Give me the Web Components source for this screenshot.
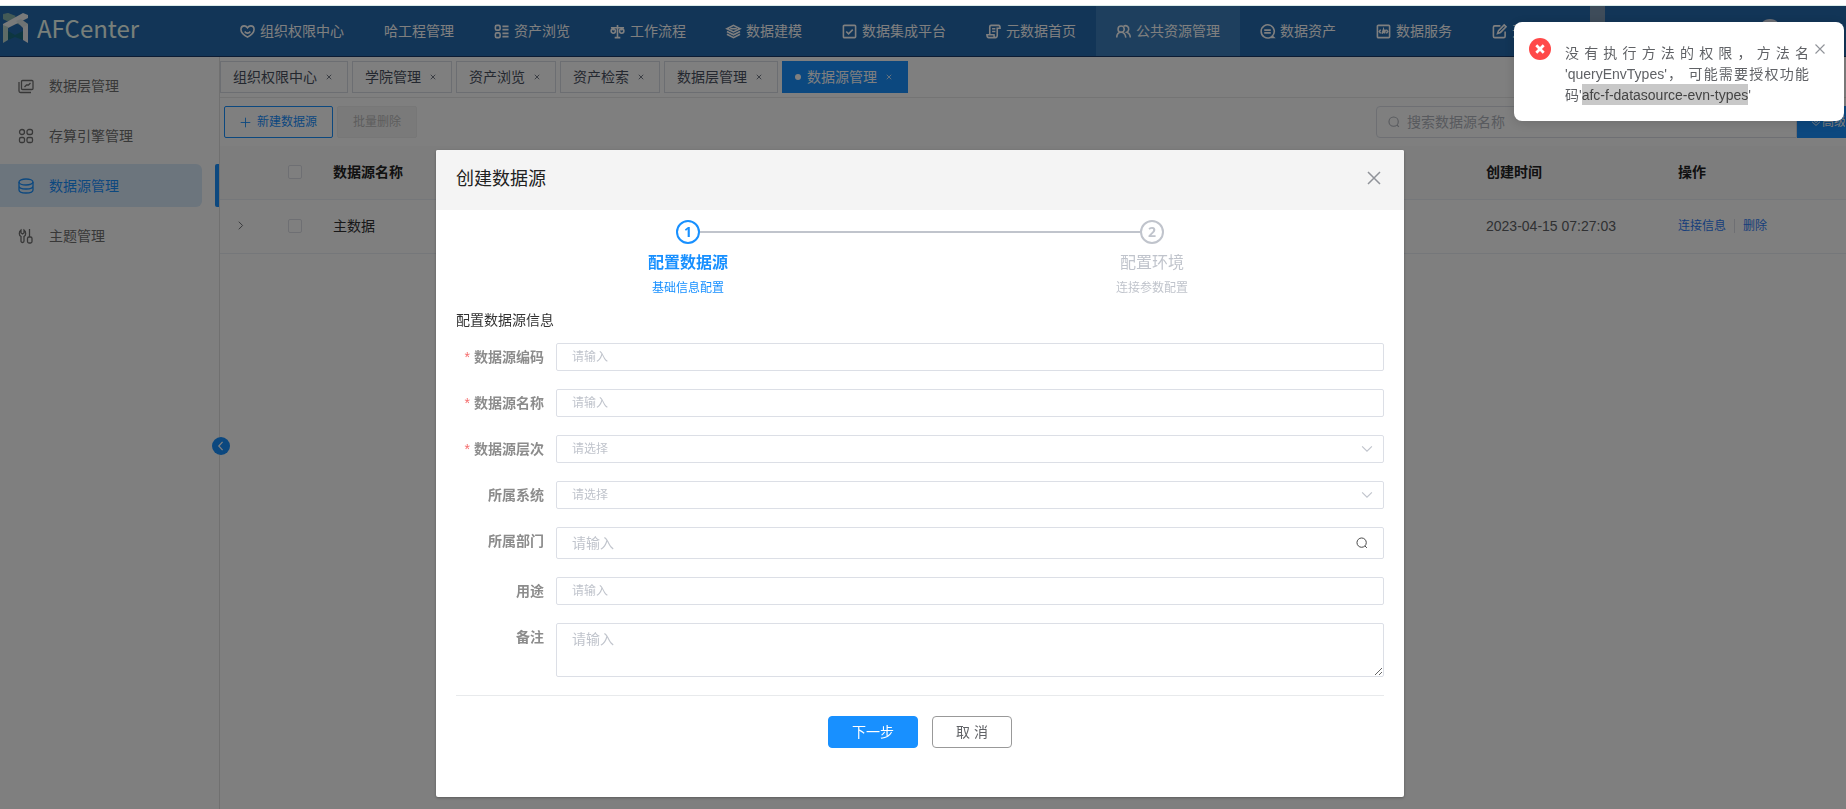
<!DOCTYPE html>
<html lang="zh-CN">
<head>
<meta charset="utf-8">
<title>AFCenter</title>
<style>
  html, body {
    margin: 0;
    height: 100%;
  }
  body {
    --primary: #1890ff;
    --line: #dcdfe6;
    background: #fff;
    color: #333;
    font: 14px/20px "Liberation Sans", "Noto Sans CJK SC", sans-serif;
    overflow: hidden;
  }
</style>
</head>
<body>
<afc-app></afc-app>

<script>
const ICONS = {
  heart: '<path d="M8 14C3.500 11.500 1 9 1 5.800 1 3.500 2.600 2 4.600 2 6.200 2 7.300 3 8 4c.7-1 1.800-2 3.400-2C13.400 2 15 3.500 15 5.800 15 9 12.500 11.500 8 14z"/><path d="M5 8c1.500 2.300 4.500 2.300 6 0"/>',
  list: '<rect x="1.500" y="1.500" width="5" height="5" rx="1.500"/><rect x="1.500" y="9.500" width="5" height="5" rx="1.500"/><path d="M9 2.500h6.500M9 6h6.500M9 10h6.500M9 13.500h6.500"/>',
  scale: '<path d="M8 1v14M5 14.500h6M1 4h14M3.500 4v3M12.500 4v3"/><circle cx="3.500" cy="7.500" r="2.300"/><circle cx="12.500" cy="7.500" r="2.300"/>',
  layers: '<path d="M8 1.500L15 5 8 8.500 1 5z"/><path d="M4.500 5h7"/><path d="M1 8l7 3.500L15 8M1 11l7 3.500 7-3.500"/>',
  check: '<rect x="1.500" y="1.500" width="13" height="13" rx="1"/><path d="M4.500 8l2.500 2.500L11.500 6"/>',
  scroll: '<path d="M4 11V3c0-1 .5-1.500 1.500-1.500h8c1 0 1.500 1 1.500 3h-3V12c0 2-1 2.500-2 2.500H3c-1.500 0-2-1-2-3h7.500c0 2 .5 3 1.500 3"/><path d="M6.500 5h3.500M6.500 8h3.500"/>',
  users: '<circle cx="5.500" cy="5.500" r="3.300"/><path d="M.8 14.500c0-3.500 2-5.700 4.700-5.700s4.500 2.200 5 5.700M8 2.500C11 .5 14 3 13.500 6c-.2 1.300-1 2.300-2 2.800 2.300.8 3.700 3 3.700 5.700"/>',
  chat: '<path d="M13 13a7 7 0 1 0-2 1.300h3.500z"/><path d="M4.500 6.500h7M4.500 9.500h7"/>',
  code: '<rect x="1.500" y="1.500" width="13" height="13" rx="1"/><path d="M5 6L3.500 8 5 10M11 6l1.500 2L11 10M6.500 10.500L8 6l1 4 1-4"/>',
  edit: '<path d="M9 2H3c-1 0-1.500.5-1.500 1.500V13c0 1 .5 1.500 1.500 1.500h9.500c1 0 1.500-.5 1.500-1.500V8"/><path d="M6 10l1-3 6-6 2 2-6 6z"/>',
  frame: '<rect x="3.500" y="2.500" width="11.500" height="9" rx="1"/><path d="M1 4v9c0 1 .5 1.500 1.500 1.500H13M6.500 9l2-2h2l2-2"/>',
  grid: '<circle cx="4" cy="4" r="2.500"/><rect x="9" y="1.500" width="5.500" height="5" rx="2"/><rect x="1.500" y="9.500" width="5" height="5" rx="1.500"/><rect x="9" y="9.500" width="5.500" height="5" rx="1.500"/>',
  database: '<ellipse cx="8" cy="4" rx="7" ry="3"/><path d="M1 4v8c0 4 14 4 14 0V4M1 8c0 4 14 4 14 0"/>',
  tools: '<path d="M3 8.500C1 7.500.5 4 3 2v3l1.500 1L6 5V2c2.500 2 2 5.500 0 6.500V13c0 2-3 2-3 0zM11.500 1v8"/><rect x="9.500" y="9" width="4.500" height="6" rx="1.500"/>',
  plus: '<path d="M8 1v14M1 8h14"/>',
  close: '<path d="M2 2l12 12M14 2L2 14"/>',
  search: '<circle cx="7.500" cy="7.500" r="6.200"/><path d="M12 12l2.500 2.500"/>',
  left: '<path d="M10.500 1.500L4.500 8l6 6.500"/>',
  right: '<path d="M5.500 2.500L11 8l-5.500 5.500"/>',
  down: '<path d="M1.500 4.500L8 11l6.500-6.500"/>',
  more: '<path d="M1.500 3L8 9l6.500-6M1.500 7.500l6.500 6 6.500-6"/>',
  error: '<circle cx="8" cy="8" r="8" fill="currentColor" stroke="none"/><path d="M5.300 5.300l5.400 5.400M10.700 5.300l-5.400 5.400" stroke="#fff" stroke-width="2"/>'
};

// Base class: puts the class's markup in an open shadow root
class AfcElement extends HTMLElement {
  connectedCallback() {
    if (this.shadowRoot) return;
    this.attachShadow({ mode: 'open' });
    this.shadowRoot.innerHTML = this.render();
  }
  attr(name) {
    return this.getAttribute(name) || '';
  }
}

class AfcIcon extends AfcElement {
  render() {
    return `
      <style>
        :host { display: inline-flex; flex: none; width: 15px; height: 15px; }
        svg { width: 100%; height: 100%; overflow: visible; }
      </style>
      <svg viewBox="0 0 16 16" fill="none" stroke="currentColor" stroke-width="${this.attr('stroke') || 1.5}" aria-hidden="true">${ICONS[this.attr('name')]}</svg>
    `;
  }
}

class AfcNavItem extends AfcElement {
  render() {
    const icon = this.attr('icon');
    return `
      <style>
        :host { display: flex; flex: none; }
        a {
          display: flex;
          align-items: center;
          gap: 5px;
          padding: 0 20px;
          color: #fff;
          text-decoration: none;
          white-space: nowrap;
        }
        :host([active]) a { background: #3c7ebc; }
      </style>
      <a href="#">${icon ? `<afc-icon name="${icon}" stroke="1.700"></afc-icon>` : ''}<slot></slot></a>
    `;
  }
}

class AfcHeader extends AfcElement {
  render() {
    return `
      <style>
        :host {
          display: flex;
          height: 50px;
          background: #246aae;
          border-bottom: 1px solid #183868;
          overflow: hidden;
        }
        .logo {
          display: flex;
          align-items: center;
          gap: 8px;
          flex: none;
          box-sizing: border-box;
          width: 220px;
          padding: 0 0 6px 2px;
          color: #f0fff4;
          font: 24px/40px "Noto Sans CJK SC", sans-serif;
        }
        .logo svg { width: 27px; height: 32px; }
        nav { display: flex; flex: none; }
        .block { width: 15px; height: 16px; margin-left: 44px; background: #7c98b4; }
        .avatar { width: 22px; height: 22px; margin: 13px 0 0 154px; border-radius: 50%; background: #d8dce8; }
      </style>
      <div class="logo">
        <svg viewBox="0 0 27 32" aria-hidden="true">
          <path d="M1 2l5-1 20 11v3l-5-1L1 7z" fill="#7fa9ac"/>
          <path d="M6 1L1 3v4l4 2 5-2 4-3z" fill="#86b4ac"/>
          <path d="M21 1l5 2v3L6 16l-5 1v-5z" fill="#f2f4f4"/>
          <path d="M14 9l5-2 7 5v5l-5-1z" fill="#dfe6e8"/>
          <path d="M21 15l5-2v18l-5-3z" fill="#eef0f2"/>
          <path d="M1 13l5 2v13l-5 3z" fill="#bcd6cc"/>
          <path d="M6 19l7 4 8-4v9l-8-3-7 3z" fill="#1a6c80"/>
        </svg>
        <span>AFCenter</span>
      </div>
      <nav>
        <afc-nav-item icon="heart">组织权限中心</afc-nav-item>
        <afc-nav-item>哈工程管理</afc-nav-item>
        <afc-nav-item icon="list">资产浏览</afc-nav-item>
        <afc-nav-item icon="scale">工作流程</afc-nav-item>
        <afc-nav-item icon="layers">数据建模</afc-nav-item>
        <afc-nav-item icon="check">数据集成平台</afc-nav-item>
        <afc-nav-item icon="scroll">元数据首页</afc-nav-item>
        <afc-nav-item icon="users" active>公共资源管理</afc-nav-item>
        <afc-nav-item icon="chat">数据资产</afc-nav-item>
        <afc-nav-item icon="code">数据服务</afc-nav-item>
        <afc-nav-item icon="edit">开</afc-nav-item>
      </nav>
      <div class="block"></div>
      <div class="avatar"></div>
    `;
  }
}

class AfcSideItem extends AfcElement {
  render() {
    return `
      <style>
        :host { display: flex; justify-content: space-between; height: 43px; color: #707070; }
        a {
          display: flex;
          flex: 1;
          align-items: center;
          gap: 15px;
          padding-left: 18px;
          margin-right: 17px;
          border-radius: 0 6px 6px 0;
          color: inherit;
          text-decoration: none;
        }
        afc-icon { width: 16px; height: 16px; }
        :host([active]) { color: var(--primary); }
        :host([active]) a { background: #d8eafa; margin-right: 13px; }
        :host([active])::after {
          content: "";
          width: 4px;
          border-radius: 2px 0 0 2px;
          background: var(--primary);
        }
      </style>
      <a href="#"><afc-icon name="${this.attr('icon')}" stroke="1.300"></afc-icon><slot></slot></a>
    `;
  }
}

class AfcSidebar extends AfcElement {
  render() {
    return `
      <style>
        :host {
          display: block;
          position: relative;
          flex: none;
          width: 219px;
          border-right: 1px solid #e0e0e0;
        }
        nav { display: flex; flex-direction: column; gap: 7px; padding-top: 7px; }
        /* round handle that sits on the border */
        button {
          position: absolute;
          top: 380px;
          right: -11px;
          display: flex;
          align-items: center;
          justify-content: center;
          width: 18px;
          height: 18px;
          padding: 0;
          border: 0;
          border-radius: 50%;
          background: var(--primary);
          color: #fff;
        }
        button afc-icon { width: 10px; height: 10px; }
      </style>
      <nav>
        <afc-side-item icon="frame">数据层管理</afc-side-item>
        <afc-side-item icon="grid">存算引擎管理</afc-side-item>
        <afc-side-item icon="database" active>数据源管理</afc-side-item>
        <afc-side-item icon="tools">主题管理</afc-side-item>
      </nav>
      <button type="button" aria-label="收起"><afc-icon name="left" stroke="2"></afc-icon></button>
    `;
  }
}

class AfcTab extends AfcElement {
  render() {
    return `
      <style>
        :host {
          display: flex;
          align-items: center;
          height: 30px;
          padding: 0 12px;
          border: 1px solid #d8dce5;
          color: #495060;
          white-space: nowrap;
        }
        button { display: flex; margin-left: 7px; padding: 2px 3px 2px 2px; border: 0; background: none; color: inherit; }
        afc-icon { width: 6px; height: 6px; }
        .dot { display: none; width: 6px; height: 6px; margin-right: 6px; border-radius: 50%; background: #fff; }
        :host([active]) { color: #fff; background: var(--primary); border-color: var(--primary); }
        :host([active]) .dot { display: block; }
      </style>
      <span class="dot"></span><slot></slot>
      <button type="button" aria-label="关闭"><afc-icon name="close" stroke="2"></afc-icon></button>
    `;
  }
}

class AfcToolbar extends AfcElement {
  render() {
    return `
      <style>
        :host { display: flex; align-items: center; gap: 4px; padding: 8px 0 8px 4px; }
        button {
          box-sizing: border-box;
          display: flex;
          align-items: center;
          height: 32px;
          padding: 0 15px;
          border: 1px solid var(--primary);
          border-radius: 2px;
          background: #fff;
          color: var(--primary);
          font: inherit;
          font-size: 12px;
          white-space: nowrap;
        }
        button afc-icon { width: 11px; height: 11px; margin-right: 6px; }
        button:disabled { background: #f5f5f5; border-color: #eee; color: #bbb; }
        .search {
          box-sizing: border-box;
          display: flex;
          align-items: center;
          gap: 7px;
          width: 421px;
          height: 32px;
          margin-left: auto;
          padding: 0 11px;
          border: 1px solid var(--line);
          border-radius: 4px 0 0 4px;
          color: #b0b4bc;
        }
        .search afc-icon { width: 12px; height: 12px; }
        input { flex: 1; min-width: 0; border: 0; padding: 0; background: none; font: inherit; outline: 0; }
        input::placeholder { color: #b0b4bc; }
        .more {
          width: 49px;
          margin-left: -4px;
          padding: 0 0 0 13px;
          border-radius: 0;
          background: var(--primary);
          color: #fff;
          overflow: hidden;
        }
        .more afc-icon { width: 10px; height: 10px; margin-right: 1px; }
      </style>
      <button type="button"><afc-icon name="plus" stroke="1.300"></afc-icon>新建数据源</button>
      <button type="button" disabled>批量删除</button>
      <div class="search">
        <afc-icon name="search"></afc-icon>
        <input type="text" placeholder="搜索数据源名称" aria-label="搜索数据源名称">
      </div>
      <button class="more" type="button"><afc-icon name="more"></afc-icon>高级</button>
    `;
  }
}

class AfcTable extends AfcElement {
  render() {
    return `
      <style>
        :host { display: block; }
        table { width: 100%; table-layout: fixed; border-collapse: collapse; }
        th, td { height: 51px; padding: 0 0 2px; border-bottom: 1px solid #ebeef5; text-align: left; }
        th { background: #fafafa; color: #222; font-weight: 700; }
        td { color: #606266; }
        .c { text-align: center; vertical-align: middle; }
        .name { color: #303133; }
        input {
          appearance: none;
          display: block;
          width: 14px;
          height: 14px;
          margin: 0 0 0 28px;
          border: 1px solid var(--line);
          border-radius: 2px;
          background: #fff;
        }
        button { padding: 0; border: 0; background: none; color: #606266; }
        button afc-icon { width: 11px; height: 11px; }
        a { color: #2e7cf6; font-size: 12px; text-decoration: none; }
        a + a { margin-left: 8px; padding-left: 8px; border-left: 1px solid var(--line); }
      </style>
      <table>
        <colgroup>
          <col style="width: 40px"><col style="width: 73px"><col>
          <col style="width: 192px"><col style="width: 168px">
        </colgroup>
        <thead>
          <tr>
            <th></th>
            <th><input type="checkbox" aria-label="全选"></th>
            <th>数据源名称</th>
            <th>创建时间</th>
            <th>操作</th>
          </tr>
        </thead>
        <tbody>
          <tr>
            <td class="c"><button type="button" aria-label="展开"><afc-icon name="right" stroke="1.300"></afc-icon></button></td>
            <td><input type="checkbox" aria-label="主数据"></td>
            <td class="name">主数据</td>
            <td>2023-04-15 07:27:03</td>
            <td><a href="#">连接信息</a><a href="#">删除</a></td>
          </tr>
        </tbody>
      </table>
    `;
  }
}

class AfcStep extends AfcElement {
  render() {
    return `
      <style>
        :host {
          display: grid;
          grid-template-columns: 1fr 24px 1fr;
          align-items: center;
          flex: 1;
          color: #c0c4cc;
          text-align: center;
        }
        .line { height: 2px; }
        :host(:first-child) .after, :host(:last-child) .before { background: #c0c4cc; }
        .num {
          box-sizing: border-box;
          height: 24px;
          border: 2px solid currentColor;
          border-radius: 50%;
          font: 700 14px/20px "Noto Sans", sans-serif;
        }
        .title, .desc { grid-column: 1 / -1; }
        .title { font-size: 16px; line-height: 38px; }
        .desc { font-size: 12px; line-height: 12px; }
        :host([active]) { color: var(--primary); }
        :host([active]) .title { font-weight: 700; }
      </style>
      <div class="line before"></div>
      <div class="num">${this.attr('num')}</div>
      <div class="line after"></div>
      <div class="title">${this.attr('title-text')}</div>
      <div class="desc"><slot></slot></div>
    `;
  }
}

class AfcField extends AfcElement {
  control() {
    switch (this.attr('type')) {
      case 'select':
        return `
          <select id="control"><option value="">请选择</option></select>
          <afc-icon class="arrow" name="down"></afc-icon>
        `;
      case 'textarea':
        return '<textarea id="control" placeholder="请输入"></textarea>';
      case 'search':
        return `
          <input id="control" class="tall" type="text" placeholder="请输入">
          <button type="button" aria-label="搜索"><afc-icon name="search" stroke="1.300"></afc-icon></button>
        `;
      default:
        return '<input id="control" type="text" placeholder="请输入">';
    }
  }
  render() {
    return `
      <style>
        :host { display: flex; align-items: flex-start; }
        label {
          flex: none;
          width: 88px;
          padding-right: 12px;
          color: #8c8c8c;
          font-weight: 700;
          line-height: 28px;
          text-align: right;
        }
        :host([required]) label::before { content: "*"; margin-right: 4px; color: #f56c6c; font-weight: 400; }
        .box { display: grid; flex: 1; align-items: center; }
        .box > * { grid-area: 1 / 1; }
        input, select, textarea {
          appearance: none;
          box-sizing: border-box;
          width: 100%;
          height: 28px;
          margin: 0;
          padding: 0 15px;
          border: 1px solid var(--line);
          border-radius: 2px;
          background: #fff;
          color: #c0c4cc;
          font: inherit;
          font-size: 12px;
          outline: 0;
        }
        ::placeholder { color: #c0c4cc; opacity: 1; }
        .tall { height: 32px; font-size: 14px; }
        textarea { display: block; height: 54px; padding: 5px 15px; font-size: 14px; line-height: 21px; }
        .arrow { width: 12px; height: 12px; margin-right: 11px; justify-self: end; color: #c0c4cc; }
        button {
          justify-self: end;
          display: flex;
          align-items: center;
          justify-content: center;
          width: 44px;
          height: 32px;
          padding: 0;
          border: 0;
          background: none;
          color: #444;
        }
        button afc-icon { width: 12px; height: 12px; }
      </style>
      <label for="control">${this.attr('label')}</label>
      <div class="box">${this.control()}</div>
    `;
  }
}

class AfcDialog extends AfcElement {
  render() {
    return `
      <style>
        :host {
          display: block;
          width: 90%;
          max-width: 968px;
          margin: 144px auto 0;
          border-radius: 2px;
          background: #fff;
          box-shadow: 0 1px 3px rgba(0, 0, 0, .3);
          overflow: hidden;
        }
        header {
          display: flex;
          align-items: center;
          justify-content: space-between;
          height: 58px;
          padding: 0 20px 2px;
          background: #f4f4f4;
          color: #222;
        }
        h2 { margin: 0; font-size: 18px; font-weight: 400; line-height: 24px; }
        header button { display: flex; padding: 2px 2px 4px; border: 0; background: none; color: #909399; }
        header afc-icon { width: 16px; height: 16px; }
        .body { padding: 10px 20px 0; }
        .steps { display: flex; }
        h3 { margin: 16px 0 13px; font-size: 14px; font-weight: 400; line-height: 20px; }
        form { display: flex; flex-direction: column; gap: 18px; padding-bottom: 18px; border-bottom: 1px solid #e8eaec; }
        footer { display: flex; justify-content: center; gap: 14px; padding: 20px 0 49px; }
        footer button {
          box-sizing: border-box;
          height: 32px;
          padding: 0 23px;
          border: 1px solid #999;
          border-radius: 4px;
          background: #fff;
          color: #606266;
          font: inherit;
        }
        footer .primary { border-color: var(--primary); background: var(--primary); color: #fff; }
      </style>
      <header>
        <h2>创建数据源</h2>
        <button type="button" aria-label="关闭"><afc-icon name="close" stroke="1.500"></afc-icon></button>
      </header>
      <div class="body">
        <div class="steps">
          <afc-step num="1" title-text="配置数据源" active>基础信息配置</afc-step>
          <afc-step num="2" title-text="配置环境">连接参数配置</afc-step>
        </div>
        <h3>配置数据源信息</h3>
        <form>
          <afc-field label="数据源编码" required></afc-field>
          <afc-field label="数据源名称" required></afc-field>
          <afc-field label="数据源层次" type="select" required></afc-field>
          <afc-field label="所属系统" type="select"></afc-field>
          <afc-field label="所属部门" type="search"></afc-field>
          <afc-field label="用途"></afc-field>
          <afc-field label="备注" type="textarea"></afc-field>
        </form>
        <footer>
          <button class="primary" type="button">下一步</button>
          <button type="button">取 消</button>
        </footer>
      </div>
    `;
  }
}

class AfcToast extends AfcElement {
  render() {
    return `
      <style>
        :host {
          position: fixed;
          top: 22px;
          right: 2px;
          display: flex;
          align-items: flex-start;
          box-sizing: border-box;
          width: 330px;
          padding: 13px 17px 15px 15px;
          border-radius: 8px;
          background: #fff;
          box-shadow: 0 2px 12px rgba(0, 0, 0, .15);
        }
        .error { width: 22px; height: 22px; margin-top: 3px; color: #ff4949; }
        p {
          flex: 1;
          margin: 8px 0 0 14px;
          color: #606266;
          line-height: 21px;
          text-align: justify;
        }
        ::slotted(mark) { padding: 3px 0 2px; background: #c8c8c8; color: #444; }
        button { display: flex; margin: 7px 0 0 4px; padding: 1px; border: 0; background: none; color: #909399; }
        button afc-icon { width: 12px; height: 12px; }
      </style>
      <afc-icon class="error" name="error"></afc-icon>
      <p><slot></slot></p>
      <button type="button" aria-label="关闭"><afc-icon name="close" stroke="1.500"></afc-icon></button>
    `;
  }
}

class AfcApp extends AfcElement {
  render() {
    return `
      <style>
        :host { display: flex; flex-direction: column; height: 100vh; }
        .strip { flex: none; height: 5px; border-bottom: 1px solid #dcecea; }
        .shell { display: flex; flex: 1; min-height: 0; }
        main { flex: 1; min-width: 0; }
        .tabs { display: flex; gap: 4px; padding: 4px 0; border-bottom: 1px solid #e8e8e8; }
        .mask {
          position: fixed;
          inset: 6px 0 0;
          box-sizing: border-box;
          padding-right: 6px;
          background: rgba(0, 0, 0, .5);
          overflow: hidden;
        }
        .mask::before { content: ""; display: table; }
      </style>
      <div class="strip"></div>
      <afc-header></afc-header>
      <div class="shell">
        <afc-sidebar></afc-sidebar>
        <main>
          <div class="tabs">
            <afc-tab>组织权限中心</afc-tab>
            <afc-tab>学院管理</afc-tab>
            <afc-tab>资产浏览</afc-tab>
            <afc-tab>资产检索</afc-tab>
            <afc-tab>数据层管理</afc-tab>
            <afc-tab active>数据源管理</afc-tab>
          </div>
          <afc-toolbar></afc-toolbar>
          <afc-table></afc-table>
        </main>
      </div>
      <div class="mask"><afc-dialog role="dialog" aria-label="创建数据源"></afc-dialog></div>
      <afc-toast role="alert">没有执行方法的权限，方法名 'queryEnvTypes'， 可能需要授权功能<span>码'</span><mark>afc-f-datasource-evn-types</mark>'</afc-toast>
    `;
  }
}

customElements.define('afc-icon', AfcIcon);
customElements.define('afc-nav-item', AfcNavItem);
customElements.define('afc-header', AfcHeader);
customElements.define('afc-side-item', AfcSideItem);
customElements.define('afc-sidebar', AfcSidebar);
customElements.define('afc-tab', AfcTab);
customElements.define('afc-toolbar', AfcToolbar);
customElements.define('afc-table', AfcTable);
customElements.define('afc-step', AfcStep);
customElements.define('afc-field', AfcField);
customElements.define('afc-dialog', AfcDialog);
customElements.define('afc-toast', AfcToast);
customElements.define('afc-app', AfcApp);
</script>
</body>
</html>
